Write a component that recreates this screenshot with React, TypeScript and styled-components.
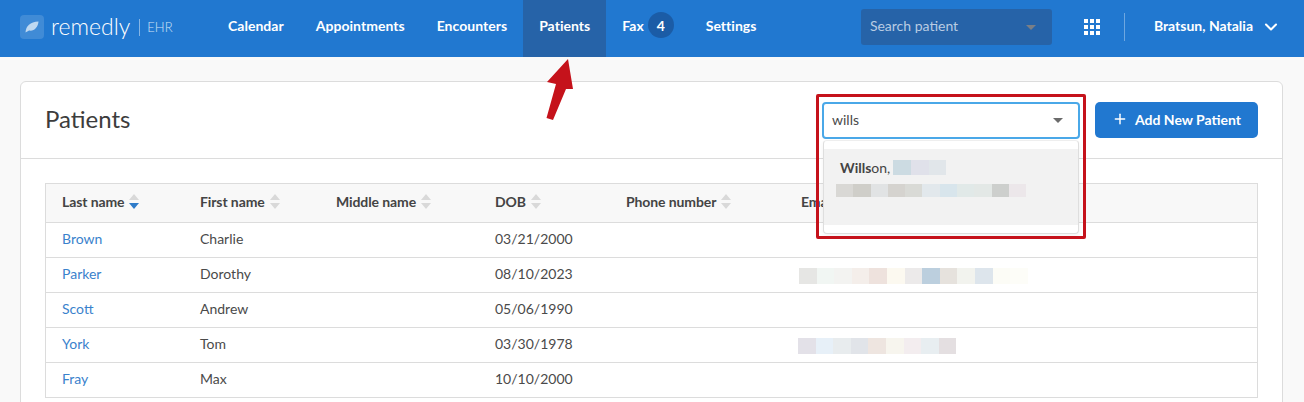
import React from "react";
import styled, { createGlobalStyle } from "styled-components";
import { Plus, ChevronDown } from "lucide-react";

const Global = createGlobalStyle`
  html, body { margin: 0; padding: 0; height: 402px; overflow: hidden; background: #f9f9f9; }
  body { font-family: Lato, "Open Sans", sans-serif; color: #3f3f3f; font-size: 14px; }
`;
const Page = styled.div`height: 402px; overflow: hidden; position: relative;`;
const Header = styled.header`
  height: 57px; box-sizing: border-box; background: #2178d0; display: flex; align-items: center; padding: 0 0 3px 20px; color: #fff;
`;
const Logo = styled.div`display: flex; align-items: center; width: 192px; flex: none;`;
const LogoMark = styled.div`
  width: 24px; height: 24px; border-radius: 4px; background: rgba(255,255,255,.14);
  display: flex; align-items: center; justify-content: center; margin-right: 7px;
`;
const LogoWord = styled.span`font-size: 23px; font-weight: 300; line-height: 24px; margin-top: -3px;`;
const LogoProduct = styled.span`
  border-left: 1px solid rgba(255,255,255,.45); margin-left: 9px; padding-left: 7px; height: 17px; line-height: 17px;
  font-size: 13px; font-weight: 300; color: #cfe2f6;
`;
const Nav = styled.nav`display: flex; height: 57px; flex: none; align-self: flex-start;`;
const NavItem = styled.a<{ $active?: boolean }>`
  display: flex; align-items: center; padding: 0 16px 7px; font-weight: 700; font-size: 14px; letter-spacing: .03px; color: #fff;
  background: ${p => (p.$active ? "#2663a8" : "transparent")};
`;
const Badge = styled.span`
  width: 26px; height: 26px; border-radius: 50%; background: #1b5ca6; margin-left: 4px;
  display: flex; align-items: center; justify-content: center;
`;
const HeadSelect = styled.div`
  margin-left: auto; width: 191px; height: 36px; border-radius: 3px; background: #2663a8; box-sizing: border-box; padding: 0 9px 3px;
  display: flex; align-items: center; justify-content: space-between; color: #b9cce3; font-weight: 400; font-size: 14px;
`;
const Caret = styled.span<{ $color: string }>`
  width: 0; height: 0; border-left: 5px solid transparent; border-right: 5px solid transparent;
  border-top: 5px solid ${p => p.$color}; margin: 3px 7px 0 0;
`;
const AppsGrid = styled.div`
  margin-left: 32px; display: grid; grid-template-columns: repeat(3, 4px); grid-auto-rows: 4px; gap: 2px; flex: none;
  & > i { background: #fff; display: block; }
`;
const VRule = styled.div`width: 1px; height: 28px; background: rgba(255,255,255,.35); margin-left: 24px;`;
const UserName = styled.div`
  margin-left: 29px; margin-right: 23px; padding-bottom: 3px; display: flex; align-items: center; gap: 8px; font-weight: 700; font-size: 14px;
  & > svg { margin-top: 3px; }
`;
const Main = styled.main`padding: 24px 20px 0 20px;`;
const Card = styled.section`
  background: #fff; border: 1px solid #dcdcdc; border-radius: 6px; height: 400px; box-sizing: border-box; width: 1263px;
`;
const CardHead = styled.div`
  height: 76px; border-bottom: 1px solid #dcdcdc; display: flex; align-items: center; padding: 0 24px; 
`;
const Title = styled.h1`margin: -3px auto 0 0; font-size: 24px; font-weight: 400; color: #3c3c3c;`;
const ComboWrap = styled.div`position: relative; width: 258px; margin-right: 15px;`;
const Combo = styled.div`
  height: 37px; border: 2px solid #4aa8e8; border-radius: 4px; box-sizing: border-box; padding: 0 8px 2px;
  display: flex; align-items: center; justify-content: space-between; font-size: 14px; color: #4a4a4a; background: #fff;
`;
const Menu = styled.div`
  position: absolute; top: 38px; left: 1px; right: 1px; height: 94px; background: #fff; border: 1px solid #dedede; border-top-color: #eee;
  border-radius: 4px; box-sizing: border-box; padding-top: 8px; z-index: 3; box-shadow: 0 2px 4px rgba(0,0,0,.05);
`;
const Option = styled.div`height: 76px; background: #f2f2f2; padding: 11px 12px 0; box-sizing: border-box;`;
const OptName = styled.div`display: flex; align-items: center; padding-left: 4px; font-size: 14px; color: #444; height: 16px; gap: 3px;`;
const OptSub = styled.div`margin-top: 8px;`;
const Mosaic = styled.div<{ $h: number }>`display: flex; height: ${p => p.$h}px;`;
const Tile = styled.span`display: block; height: 100%;`;
const AddButton = styled.button`
  width: 163px; height: 36px; background: #2178d0; color: #fff; border: 0; border-radius: 5px; font: 700 14px Lato, sans-serif;
  display: flex; align-items: center; justify-content: center; gap: 7px; flex: none; padding: 0 0 2px;
`;
const TableBox = styled.div`margin: 24px 24px 0; border: 1px solid #dcdcdc; border-bottom: 0;`;
const Table = styled.table`
  width: 100%; border-collapse: collapse; table-layout: fixed; font-size: 14px;
`;
const Th = styled.th<{ $w?: number }>`
  width: ${p => (p.$w ? `${p.$w}px` : "auto")}; height: 38px; padding: 0 0 2px 16px; background: #f8f8f8; text-align: left; font-weight: 700; color: #444;
  letter-spacing: -.1px; border-bottom: 1px solid #dcdcdc; box-sizing: border-box;
`;
const Td = styled.td`height: 35px; padding: 0 0 2px 16px; border-bottom: 1px solid #dcdcdc; box-sizing: border-box; color: #4a4a4a;`;
const MosaicTd = styled(Td)`padding: 2px 0 0 16px;`;
const NameLink = styled.a`color: #3a82cc;`;
const HeadLabel = styled.span`display: inline-flex; align-items: center; gap: 5px;`;
const Annotation = styled.div`
  position: absolute; left: 816px; top: 94px; width: 270px; height: 145px; box-sizing: border-box; border: 3px solid #c5121b; border-radius: 2px; z-index: 4; pointer-events: none;
`;
const ArrowSvg = styled.svg`position: absolute; left: 540px; top: 55px; z-index: 4;`;

const tiles = (cols: string[], w: number) => cols.map((c, i) => <Tile key={i} style={{ width: w, background: c }} />);

const Sort = ({ active }: { active?: boolean }) => (
  <svg width="10" height="15" viewBox="0 0 10 15">
    <path d="M5 0 10 6H0Z" fill="#d9d9d9" />
    <path d="M0 9H10L5 15Z" fill={active ? "#2f7cc9" : "#d9d9d9"} />
  </svg>
);

const rows: [string, string, string, string[] | null, number][] = [
  ["Brown", "Charlie", "03/21/2000", null, 0],
  ["Parker", "Dorothy", "08/10/2023", ["#e6e6e4","#f1f6f3","#f3f3f1","#f4eeea","#eee2dd","#fcf9f0","#eceaea","#bccfde","#e6e2dd","#f2f3ee","#dde5ec","#fcfcf6","#fdfdf8"], -2],
  ["Scott", "Andrew", "05/06/1990", null, 0],
  ["York", "Tom", "03/30/1978", ["#e3e1e8","#e7f0f8","#e8ecee","#e1e4e9","#eee5e0","#f7f5ee","#f3edef","#e8eef1","#e4dfe1"], -3],
  ["Fray", "Max", "10/10/2000", null, 0],
];
const heads: [string, number][] = [["Last name", 138], ["First name", 136], ["Middle name", 159], ["DOB", 131], ["Phone number", 175]];

export default function App() {
  return (
    <Page>
      <Global />
      <Header>
        <Logo>
          <LogoMark>
            <svg width="14" height="12" viewBox="0 0 14 12">
              <path d="M0.5 11.5C1 5 5 1 13.5 0.5C13 6.5 9 10.5 4 9.5C3 10 1.5 11 0.5 11.5Z" fill="#d6e6f6" opacity=".85" />
            </svg>
          </LogoMark>
          <LogoWord>remedly</LogoWord>
          <LogoProduct>EHR</LogoProduct>
        </Logo>
        <Nav>
          <NavItem>Calendar</NavItem>
          <NavItem>Appointments</NavItem>
          <NavItem>Encounters</NavItem>
          <NavItem $active>Patients</NavItem>
          <NavItem>Fax<Badge>4</Badge></NavItem>
          <NavItem>Settings</NavItem>
        </Nav>
        <HeadSelect>Search patient<Caret $color="#7a7f86" /></HeadSelect>
        <AppsGrid>{Array.from({ length: 9 }, (_, i) => <i key={i} />)}</AppsGrid>
        <VRule />
        <UserName>Bratsun, Natalia<ChevronDown size={20} strokeWidth={2.5} /></UserName>
      </Header>
      <Main>
        <Card>
          <CardHead>
            <Title>Patients</Title>
            <ComboWrap>
              <Combo>wills<Caret $color="#6b6b6b" /></Combo>
              <Menu>
                <Option>
                  <OptName><span><b>Wills</b>on,</span><Mosaic $h={15}>{tiles(["#ccdbe2","#e0e1ea","#e1e6ea"], 17.7)}</Mosaic></OptName>
                  <OptSub><Mosaic $h={13}>{tiles(["#d9d8d5","#cfcec9","#e1e3e4","#d5d3cf","#d9dad6","#e2e8ec","#d8e5ec","#e1e9e8","#e3e8e6","#cdcfcd","#ece7ea"], 17.3)}</Mosaic></OptSub>
                </Option>
              </Menu>
            </ComboWrap>
            <AddButton><Plus size={16} strokeWidth={2.2} />Add New Patient</AddButton>
          </CardHead>
          <TableBox>
            <Table>
              <thead>
                <tr>
                  {heads.map(([h, w], i) => (
                    <Th key={h} $w={w}><HeadLabel>{h}<Sort active={i === 0} /></HeadLabel></Th>
                  ))}
                  <Th>Email</Th>
                </tr>
              </thead>
              <tbody>
                {rows.map(r => (
                  <tr key={r[0]}>
                    <Td><NameLink>{r[0]}</NameLink></Td>
                    <Td>{r[1]}</Td>
                    <Td />
                    <Td>{r[2]}</Td>
                    <Td />
                    <MosaicTd>{r[3] && <Mosaic $h={16} style={{ marginLeft: r[4] }}>{tiles(r[3], 17.6)}</Mosaic>}</MosaicTd>
                  </tr>
                ))}
              </tbody>
            </Table>
          </TableBox>
        </Card>
      </Main>
      <Annotation />
      <ArrowSvg width="40" height="70" viewBox="540 55 40 70">
        <path d="M568 59 573 89 566 89 553 120 546.5 118 556 84 547 82Z" fill="#c5121b" />
      </ArrowSvg>
    </Page>
  );
}
